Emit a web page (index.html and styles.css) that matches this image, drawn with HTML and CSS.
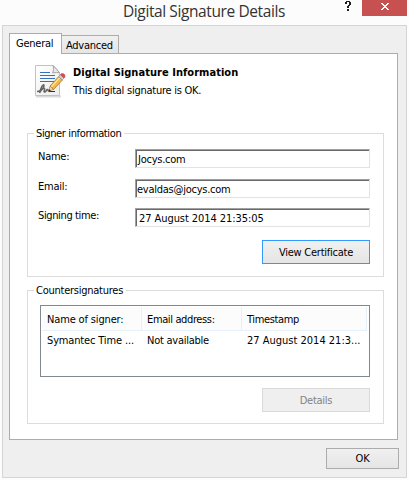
FILE: index.html
```html
<!DOCTYPE html>
<html lang="en">
<head>
<meta charset="utf-8">
<title>Digital Signature Details</title>
<link rel="stylesheet" href="styles.css">
</head>
<body>
<div class="window">
  <header class="titlebar">
    <h1 class="title">Digital Signature Details</h1>
    <div class="controls">
      <span class="help">
        <svg width="6" height="10" viewBox="0 0 6 10" shape-rendering="crispEdges" fill="#1e1e1e"><path d="M1 0h4v1H1zM0 1h2v2H0zM4 1h2v3H4zM3 4h2v1H3zM2 5h2v2H2zM2 8h2v2H2z"/></svg>
      </span>
      <span class="close">
        <svg width="8" height="7" viewBox="0 0 8 7" shape-rendering="crispEdges" fill="#fff"><path d="M0 0h2v1H0zM6 0h2v1H6zM1 1h2v1H1zM5 1h2v1H5zM2 2h4v1H2zM3 3h2v1H3zM2 4h4v1H2zM1 5h2v1H1zM5 5h2v1H5zM0 6h2v1H0zM6 6h2v1H6z"/></svg>
      </span>
    </div>
  </header>
  <main class="client">
    <nav class="tabs">
      <span class="tab active">General</span>
      <span class="tab">Advanced</span>
    </nav>
    <div class="panel">
      <section class="info">
        <svg class="doc" width="32" height="34" viewBox="0 0 32 34">
          <defs>
            <linearGradient id="paper" x1="0" y1="0" x2="1" y2="1"><stop offset="0" stop-color="#fff"/><stop offset="1" stop-color="#ececec"/></linearGradient>
          </defs>
          <path d="M1 31.500h25" stroke="#d9d9d9" stroke-width="2"/>
          <path d="M.5.5h17.700l6.300 7v23H.5z" fill="url(#paper)" stroke="#c2c2c2"/>
          <path d="M18.200 .5q1 4-.5 7.500 4-1 7-.2z" fill="#e8e8e8" stroke="#a6a6a6"/>
          <path d="M5 7.500h10M5 10.500h15M5 13.500h15M5 16.500h14" stroke="#3473b9" stroke-width="1.200"/>
          <path d="M2 26.500c4 0 7.500-3.500 7-6.500-1.500-1-3.500 4-4.500 8 2-3.500 4-5.500 5-4.500s-1.500 3 0 3.500 2-3 3-2.500 0 2 2 2" fill="none" stroke="#656565" stroke-width="1.500"/>
          <path d="M14 26.500h6" stroke="#333"/>
          <path d="M13.500 26.200l1.600-5.200 3.600 3.400z" fill="#eed8ab" stroke="#8b7450" stroke-width=".6"/>
          <path d="M13.500 26.200l.7-2.200 1.600 1.500z" fill="#333"/>
          <path d="M15.100 21l8.600-9.400 3.600 3.400-8.600 9.400z" fill="#f2ba48" stroke="#ad7420" stroke-width=".8"/>
          <path d="M16.400 21.800l8.500-9.300" stroke="#ffe39b" stroke-width="1.300"/>
          <path d="M23.700 11.600l1.700-1.900 3.600 3.400-1.700 1.900z" fill="#ccd4d8" stroke="#7d878c" stroke-width=".6"/>
          <path d="M25.400 9.700l.9-1q1.600-.8 2.900.5t.7 2.900l-.9 1z" fill="#df4a4a" stroke="#b93636" stroke-width=".5"/>
        </svg>
        <div class="info-text">
          <h2>Digital Signature Information</h2>
          <p>This digital signature is OK.</p>
        </div>
      </section>
      <section class="group signer">
        <h3 class="legend tight">Signer information</h3>
        <div class="row"><label>Name:</label><div class="field">Jocys.com</div></div>
        <div class="row"><label>Email:</label><div class="field email">evaldas@jocys.com</div></div>
        <div class="row"><label class="tight">Signing time:</label><div class="field time">27 August 2014 21:35:05</div></div>
        <button class="button focused">View Certificate</button>
      </section>
      <section class="group counter">
        <h3 class="legend">Countersignatures</h3>
        <div class="list">
          <div class="list-head"><span class="loose">Name of signer:</span><span class="tight">Email address:</span><span class="tight">Timestamp</span></div>
          <div class="list-row"><span class="loose">Symantec Time ...</span><span>Not available</span><span class="wide">27 August 2014 21:3...</span></div>
        </div>
        <button class="button" disabled>Details</button>
      </section>
    </div>
    <footer class="footer"><button class="button ok">OK</button></footer>
  </main>
</div>
</body>
</html>
```
FILE: styles.css
```css
* { box-sizing: border-box; }

body {
  margin: 0;
  width: 409px;
  height: 480px;
  overflow: hidden;
  background: #fcfcfc;
  color: #000;
  font: 11px/15px "DejaVu Sans Condensed", "DejaVu Sans", sans-serif;
  font-stretch: condensed;
  letter-spacing: -0.25px;
  white-space: nowrap;
}

h1, h2, h3, p { margin: 0; font-size: inherit; font-weight: normal; }

.tight { letter-spacing: -0.37px; }
.loose { letter-spacing: -0.15px; }
.wide { letter-spacing: 0; }

.window { padding: 0 2px 2px; height: 480px; }

.titlebar {
  display: flex;
  justify-content: space-between;
  height: 25px;
}

.title {
  padding-left: 121px;
  font: 15.5px/22px "Open Sans", sans-serif;
  letter-spacing: -0.4px;
  color: #333;
}

.controls { display: flex; align-items: flex-start; }
.help { display: flex; padding: 1px 11px 0 0; }

.close {
  display: flex;
  justify-content: center;
  width: 45px;
  height: 16px;
  padding-top: 3px;
  background: #c75050;
}

.client {
  width: 405px;
  height: 453px;
  padding: 7px 8px 0 6px;
  border: 1px solid #d5d5d5;
  background: #efefef;
}

.tabs { display: flex; align-items: flex-end; height: 20px; }

.tab {
  width: 57px;
  height: 18px;
  padding: 2px 0 0 4px;
  border: 1px solid #acacac;
  border-left: 0;
  border-bottom: 0;
  background: linear-gradient(#f0f0f0, #e5e5e5);
}

.tab.active {
  z-index: 1;
  width: 53px;
  height: 21px;
  margin-bottom: -1px;
  padding: 2px 0 0 6px;
  border-left: 1px solid #acacac;
  background: #fff;
}

.panel {
  width: 389px;
  height: 387px;
  padding: 11px 13px 0 17px;
  border: 1px solid #acacac;
  background: #fff;
}

.info { display: flex; height: 68px; padding-left: 8px; }
.info-text { padding-left: 6px; }
.info h2 { height: 18px; font-weight: bold; letter-spacing: 0.04px; }

.group {
  display: flex;
  flex-direction: column;
  width: 357px;
  border: 1px solid #dcdcdc;
}

.signer { height: 144px; padding: 0 13px 0 10px; }
.counter { height: 134px; margin-top: 13px; padding: 0 13px 0 12px; }

.legend {
  align-self: flex-start;
  height: 15px;
  margin: -8px 0 8px -4px;
  padding: 0 3px 0 2px;
  background: #fff;
}
.counter .legend { margin: -8px 0 7px -6px; }

.row { display: flex; height: 30px; }
.row:nth-of-type(2) { height: 29px; }
.row label { width: 97px; }

.field {
  width: 235px;
  height: 19px;
  padding: 2px 0 0 2px;
  border: 1px solid #e3e3e3;
  border-top-color: #a0a0a0;
  border-left-color: #a0a0a0;
  box-shadow: inset 1px 1px #696969;
}
.field.email { padding-left: 1px; }
.field.time { padding-left: 3px; letter-spacing: -0.07px; }

.button {
  align-self: flex-end;
  flex: none;
  width: 108px;
  height: 24px;
  margin: 2px 0 0;
  padding: 0;
  border: 1px solid #acacac;
  background: linear-gradient(#f0f0f0, #e5e5e5);
  color: #000;
  font: inherit;
  letter-spacing: inherit;
}
.button.focused { border-color: #3399ff; }
.button:disabled { margin-top: 11px; border-color: #d9d9d9; background: #efefef; color: #838383; }

.list {
  width: 330px;
  height: 72px;
  padding: 1px;
  border: 1px solid #828790;
}

.list-head, .list-row {
  display: grid;
  grid-template-columns: 100px 100px 125px;
  height: 24px;
}
.list-head { width: 325px; border-bottom: 1px solid #e5f0fb; background: #fcfcfc; }
.list-head span { padding: 5px 0 0 5px; border-right: 1px solid #e5f0fb; }
.list-row span { padding: 2px 0 0 5px; }

.footer { display: flex; justify-content: flex-end; padding-top: 8px; }
.button.ok { width: 73px; height: 21px; margin: 0 -1px 0 0; }
```
